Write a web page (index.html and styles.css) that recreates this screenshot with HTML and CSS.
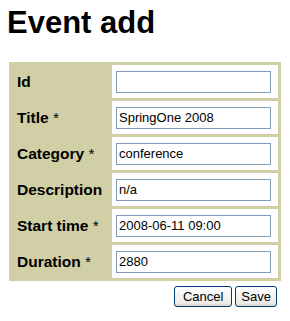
FILE: index.html
```html
<!DOCTYPE html>
<html lang="en">
<head>
    <meta charset="UTF-8">
    <title>Event add</title>
    <link rel="stylesheet" href="styles.css">
</head>
<body>
    <h1>Event add</h1>

    <form class="event-form">
        <table class="fields">
            <tr>
                <th>Id</th>
                <td><input type="text" value=""></td>
            </tr>
            <tr>
                <th>Title <span class="req">*</span></th>
                <td><input type="text" value="SpringOne 2008"></td>
            </tr>
            <tr>
                <th>Category <span class="req">*</span></th>
                <td><input type="text" value="conference"></td>
            </tr>
            <tr>
                <th>Description</th>
                <td><input type="text" value="n/a"></td>
            </tr>
            <tr>
                <th>Start time <span class="req">*</span></th>
                <td><input type="text" value="2008-06-11 09:00"></td>
            </tr>
            <tr>
                <th>Duration <span class="req">*</span></th>
                <td><input type="text" value="2880"></td>
            </tr>
        </table>

        <div class="actions">
            <button type="button" class="cancel">Cancel</button>
            <button type="submit" class="save">Save</button>
        </div>
    </form>
</body>
</html>
```

FILE: styles.css
```css
body {
    font-family: "Liberation Sans", Arial, sans-serif;
    margin: 0;
    padding: 4px 9px 0 9px;
}
h1 {
    font-size: 31px;
    line-height: 37px;
    margin: 0 0 0 -2px;
}
.event-form {
    width: 272px;
    margin-top: 21px;
}
.fields {
    background-color: #d0cfa6;
    border-spacing: 3px;
    width: 272px;
}
.fields th {
    text-align: left;
    font-size: 15.5px;
    padding: 0 0 0 5px;
    width: 92px;
    white-space: nowrap;
}
.fields th .req {
    font-weight: normal;
}
.fields td {
    background-color: #ffffff;
    height: 33px;
    padding: 0 0 0 4px;
}
.fields input {
    box-sizing: border-box;
    width: 155px;
    height: 22px;
    border: 1px solid #7f9db9;
    padding: 1px 2px;
    font-family: "Liberation Sans", Arial, sans-serif;
    font-size: 13px;
    display: block;
}
.actions {
    display: flex;
    justify-content: flex-end;
    gap: 3px;
    margin-top: 5px;
    padding-right: 4px;
}
.actions button {
    font-family: "Liberation Sans", Arial, sans-serif;
    font-size: 13px;
    height: 21px;
    border: 1px solid #003c74;
    border-radius: 3px;
    background: linear-gradient(#ffffff, #ecebe6 85%, #d6d0c5);
    color: #000;
}
.actions .cancel {
    padding: 0 8px;
}
.actions .save {
    padding: 0 5px;
}
```
